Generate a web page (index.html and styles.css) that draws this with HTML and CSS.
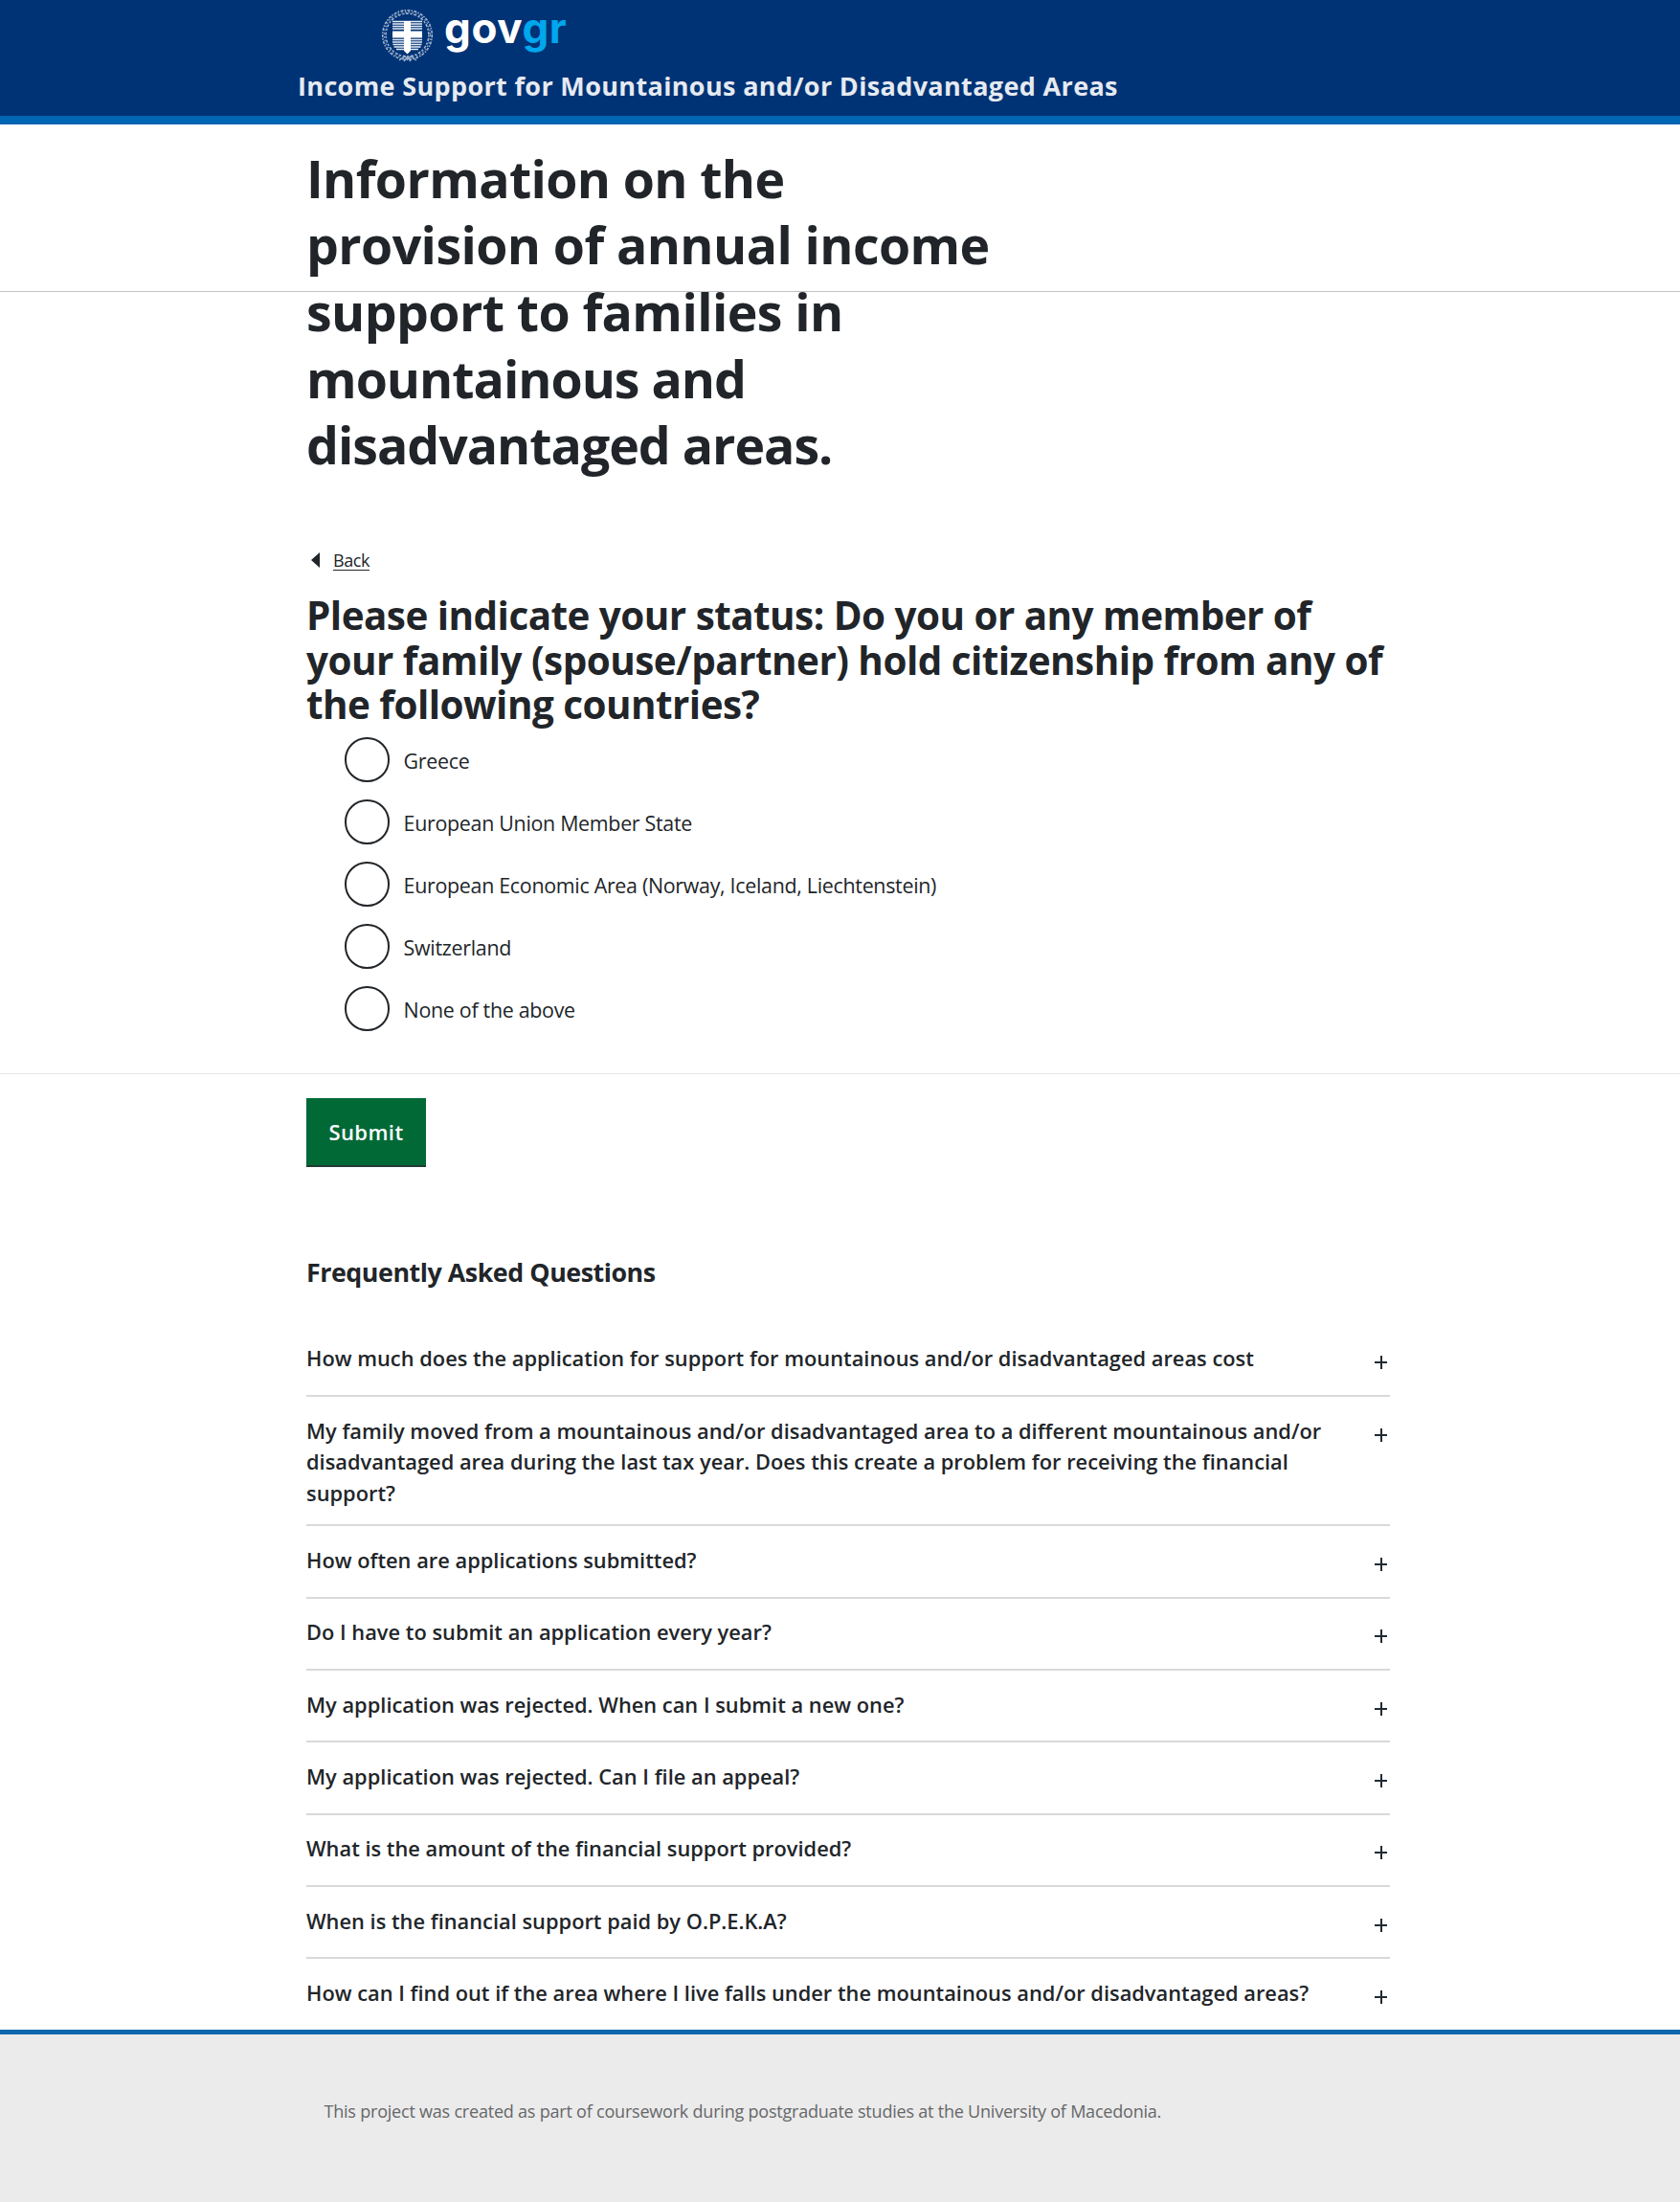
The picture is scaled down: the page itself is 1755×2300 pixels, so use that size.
FILE: index.html
```
<!DOCTYPE html>
<html lang="en">
<head>
<meta charset="utf-8">
<title>Income Support for Mountainous and/or Disadvantaged Areas</title>
<link rel="stylesheet" href="styles.css">
</head>
<body>
<header class="site-header">
  <div class="brand">
    <svg class="emblem" viewBox="0 0 55 56" aria-hidden="true">
      <g fill="none" stroke="#9fb2d0">
        <circle cx="27.500" cy="27.500" r="25.800" stroke-width="1.600" stroke-dasharray="3 1.200 1.500 1.400"/>
        <circle cx="27.500" cy="27.500" r="22.400" stroke-width="1.600" stroke-dasharray="2.200 1.400 3 1.700"/>
        <circle cx="27.500" cy="27.500" r="24.100" stroke-width="1.200" stroke-dasharray="1.500 2.300"/>
        <path d="M19 54l6-4 3 2 3-2 6 4M24 55l3.500-4 3.500 4" stroke-width="1.200"/>
      </g>
      <path d="M12 13h31v23c0 5-3 8-8 8-4 0-6 .5-7.500 2.500-1.500-2-3.500-2.500-7.500-2.500-5 0-8-3-8-8z" fill="#003375"/>
      <path d="M12 13.500h31M12 16h31M12 18.500h31M12 21h31M12 32.500h31M12 35h31M12.500 37.500h30M13.500 40h28M16 42.500h23" stroke="#e3e9f3" stroke-width="1.300"/>
      <path d="M24 13h7v31l-3.500 3.500-3.500-3.500zM12 23.500h31v7H12z" fill="#fff"/>
    </svg>
    <div class="wordmark">gov<span class="wordmark-accent">gr</span></div>
  </div>
  <div class="service-name">Income Support for Mountainous and/or Disadvantaged Areas</div>
</header>

<section class="hero">
  <h1 class="hero-title">
    <span class="line line-loose">Information on the</span>
    <span class="line">provision of annual income</span>
    <span class="line">support to families in</span>
    <span class="line line-tight">mountainous and</span>
    <span class="line line-tight">disadvantaged areas.</span>
  </h1>
</section>

<main>
  <form class="question">
    <a class="back"><svg class="back-arrow" viewBox="0 0 9 16" aria-hidden="true"><path d="M9 0v16L0 8z" fill="#212529"/></svg><span class="back-label">Back</span></a>
    <h2 class="question-title">Please indicate your status: Do you or any member of<br>your family (spouse/partner) hold citizenship from any of<br>the following countries?</h2>
    <div class="options">
      <label class="option"><span class="radio"></span><span class="option-text">Greece</span></label>
      <label class="option"><span class="radio"></span><span class="option-text">European Union Member State</span></label>
      <label class="option"><span class="radio"></span><span class="option-text">European Economic Area (Norway, Iceland, Liechtenstein)</span></label>
      <label class="option"><span class="radio"></span><span class="option-text">Switzerland</span></label>
      <label class="option"><span class="radio"></span><span class="option-text">None of the above</span></label>
    </div>
  </form>
  <hr class="divider">
  <div class="column">
    <button class="submit" type="button">Submit</button>
    <h3 class="faq-title">Frequently Asked Questions</h3>
    <ul class="faq">
      <li class="faq-item"><span>How much does the application for support for mountainous and/or disadvantaged areas cost</span><i class="plus"></i></li>
      <li class="faq-item"><span>My family moved from a mountainous and/or disadvantaged area to a different mountainous and/or<br>disadvantaged area during the last tax year. Does this create a problem for receiving the financial<br>support?</span><i class="plus"></i></li>
      <li class="faq-item"><span>How often are applications submitted?</span><i class="plus"></i></li>
      <li class="faq-item"><span>Do I have to submit an application every year?</span><i class="plus"></i></li>
      <li class="faq-item"><span>My application was rejected. When can I submit a new one?</span><i class="plus"></i></li>
      <li class="faq-item"><span>My application was rejected. Can I file an appeal?</span><i class="plus"></i></li>
      <li class="faq-item"><span>What is the amount of the financial support provided?</span><i class="plus"></i></li>
      <li class="faq-item"><span>When is the financial support paid by O.P.E.K.A?</span><i class="plus"></i></li>
      <li class="faq-item"><span>How can I find out if the area where I live falls under the mountainous and/or disadvantaged areas?</span><i class="plus"></i></li>
    </ul>
  </div>
</main>

<footer class="site-footer">This project was created as part of coursework during postgraduate studies at the University of Macedonia.</footer>
</body>
</html>
```
FILE: styles.css
```
* { box-sizing: border-box; }

html { background: #ebebeb; }

body {
  margin: 0;
  background: #fff;
  color: #212529;
  font-family: "Open Sans", "Noto Sans", sans-serif;
}

.site-header {
  height: 130px;
  background: #003375;
  border-bottom: 9px solid #0065b3;
}

.brand {
  display: flex;
  height: 69px;
  padding: 3px 0 0 398px;
  gap: 11px;
}

.emblem { width: 55px; height: 56px; margin-top: 6px; }

.wordmark {
  font: 700 44px/52px "Inter", sans-serif;
  letter-spacing: .6px;
  color: #fff;
}

.wordmark-accent { color: #00a7ec; }

.service-name {
  padding-left: 311px;
  font-size: 27px;
  line-height: 41px;
  font-weight: 700;
  letter-spacing: .35px;
  color: #e6eaf1;
  white-space: nowrap;
}

/* The title is taller than the banner and runs past its bottom rule. */
.hero {
  height: 175px;
  padding: 21.5px 0 0 320px;
  border-bottom: 1px solid #c2c2c4;
}

.hero-title {
  margin: 0;
  font-size: 53.6px;
  line-height: 69.7px;
  font-weight: 700;
  letter-spacing: -.58px;
  white-space: nowrap;
}

.line { display: block; }
.line-loose { letter-spacing: -.62px; }
.line-tight { letter-spacing: -1px; }

.question {
  padding: 266px 0 0 320px;
}

.back {
  display: flex;
  align-items: center;
  height: 28px;
  padding-left: 5px;
  gap: 14px;
  font-size: 18px;
  line-height: 28px;
  letter-spacing: -.45px;
}

.back-arrow { width: 9px; height: 16px; }
.back-label {
  text-decoration: underline;
  text-decoration-thickness: 1px;
  text-underline-offset: 3px;
}

.question-title {
  margin: 21px 0 0;
  font-size: 40.4px;
  line-height: 46.6px;
  font-weight: 700;
  letter-spacing: -.52px;
  white-space: nowrap;
}

.options {
  display: flex;
  flex-direction: column;
  gap: 18.35px;
  padding: 10.5px 0 0 40px;
}

.option {
  display: flex;
  align-items: center;
  height: 46.65px;
  gap: 15px;
  font-size: 21.4px;
  line-height: 32px;
  letter-spacing: -.29px;
}

.option-text { padding-top: 3px; }

.radio {
  width: 46.6px;
  height: 46.6px;
  border: 2px solid #212529;
  border-radius: 50%;
}

.divider {
  height: 1px;
  margin: 44px 0 25px;
  border: 0;
  background: #e6e7e8;
}

.column { width: 1132px; margin-left: 320px; }

.submit {
  display: block;
  width: 125px;
  height: 70px;
  padding: 1px 0 0;
  border: 0;
  background: #006936;
  box-shadow: 0 2px 0 #213a35;
  color: #fff;
  font: 600 22px/32px "Open Sans", sans-serif;
  letter-spacing: .4px;
}

.faq-title {
  margin: 95px 0 38px;
  font-size: 26.8px;
  line-height: 34px;
  font-weight: 700;
  letter-spacing: -.45px;
}

.faq {
  margin: 0;
  padding: 0;
  list-style: none;
}

.faq-item {
  display: flex;
  justify-content: space-between;
  align-items: flex-start;
  min-height: 75.3px;
  padding: 19.6px 3px 16.2px 0;
  border-bottom: 2px solid #d8d9db;
  font-size: 21.8px;
  line-height: 32.5px;
  font-weight: 600;
  letter-spacing: .015px;
  white-space: nowrap;
}

.plus {
  width: 13px;
  height: 14px;
  margin-top: 13px;
  background:
    linear-gradient(#212b33, #212b33) center / 13px 2px no-repeat,
    linear-gradient(#212b33, #212b33) 6px 0 / 2px 14px no-repeat;
}

/* Covers the rule under the last question. */
.site-footer {
  position: relative;
  height: 180px;
  margin-top: -2px;
  padding: 66px 0 0 338.5px;
  border-top: 5px solid #0b66ad;
  background: #ebebeb;
  color: #666769;
  font-size: 18px;
  line-height: 28px;
  letter-spacing: -.21px;
}
```
